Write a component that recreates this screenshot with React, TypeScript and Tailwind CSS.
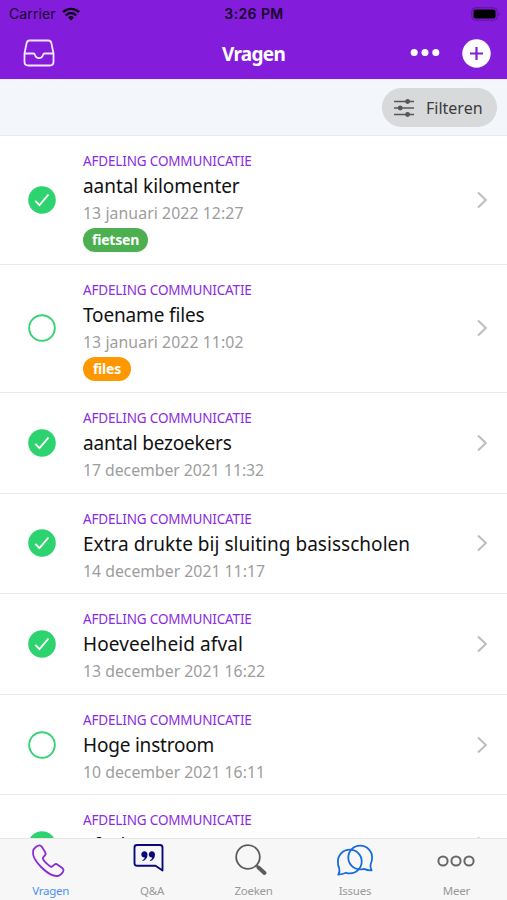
import type { ReactNode } from 'react';
import clsx from 'clsx';

interface Question {
  title: string;
  titleClass?: string;
  date?: string;
  dateClass?: string;
  done: boolean;
  tag?: { label: string; className: string };
}

const questions: Question[] = [
  {
    title: 'aantal kilomenter',
    titleClass: 'tracking-[-0.05px]',
    date: '13 januari 2022 12:27',
    dateClass: 'tracking-[0.08px]',
    done: true,
    tag: { label: 'fietsen', className: 'w-[65px] bg-[#4caf50]' },
  },
  {
    title: 'Toename files',
    titleClass: 'tracking-[-0.15px]',
    date: '13 januari 2022 11:02',
    dateClass: 'tracking-[0.08px]',
    done: false,
    tag: { label: 'files', className: 'w-12 bg-[#ff9800]' },
  },
  {
    title: 'aantal bezoekers',
    titleClass: 'tracking-[-0.18px]',
    date: '17 december 2021 11:32',
    dateClass: 'tracking-[-0.04px]',
    done: true,
  },
  {
    title: 'Extra drukte bij sluiting basisscholen',
    titleClass: 'tracking-[0.03px]',
    date: '14 december 2021 11:17',
    done: true,
  },
  {
    title: 'Hoeveelheid afval',
    titleClass: 'tracking-[0.1px]',
    date: '13 december 2021 16:22',
    done: true,
  },
  {
    title: 'Hoge instroom',
    titleClass: 'tracking-[-0.2px]',
    date: '10 december 2021 16:11',
    done: false,
  },
  {
    title: 'afval',
    done: true,
  },
];

function StatusBar() {
  return (
    <div className="flex h-[27px] items-center justify-between pr-[6px] pl-[9px] font-['Inter'] text-[#16042a]">
      <div className="flex w-[80px] items-center gap-[6px]">
        <span className="text-[14px] leading-[27px] tracking-[0.1px]">Carrier</span>
        <svg width="18" height="14" viewBox="0 0 18 14" fill="none" stroke="#0b0115" strokeWidth="2.4">
          <path d="M1 5.2a11.4 11.4 0 0 1 16 0" />
          <path d="M3.8 8.3a7.4 7.4 0 0 1 10.4 0" />
          <path d="M9 13.6 6 10.5a4.3 4.3 0 0 1 6 0z" fill="#0b0115" stroke="none" />
        </svg>
      </div>
      <span className="pr-[2px] text-[14px] font-semibold tracking-[0.4px] whitespace-nowrap">3:26 PM</span>
      <div className="flex w-[80px] justify-end">
        <svg width="30" height="14" viewBox="0 0 30 14">
          <rect x="0.8" y="0.8" width="25.4" height="12.4" rx="3.5" fill="none" stroke="#5a1397" />
          <rect x="2.5" y="2.5" width="22" height="9" rx="1.8" fill="#000" />
          <path d="M27.5 5v4c1.4-.5 1.4-3.5 0-4z" fill="#5a1397" />
        </svg>
      </div>
    </div>
  );
}

function NavBar() {
  return (
    <div className="flex h-[52px] items-center justify-between pr-4 pl-[23px] text-white">
      <div className="w-[80px]">
        <svg width="32" height="28" viewBox="0 0 32 28" fill="none" stroke="#f6e6ff" strokeWidth="1.8" strokeLinejoin="round">
          <path d="M1.5 14.5 3.6 4.2Q4.1 1.5 6.8 1.5h18.4q2.7 0 3.2 2.7l2.1 10.3v8.3q0 3.7-3.7 3.7H5.2q-3.7 0-3.7-3.7z" />
          <path d="M1.5 14.5h9.3c.6 0 .8.4 1 1 .6 2.3 2.1 3.6 4.2 3.6s3.6-1.3 4.2-3.6c.2-.6.4-1 1-1h9.3" />
        </svg>
      </div>
      <h1 className="pt-[2px] text-[19px] leading-7 font-bold tracking-[-0.7px]">Vragen</h1>
      <div className="flex w-[87px] items-center justify-end gap-[22px]">
        <svg width="30" height="8" viewBox="0 0 30 8" fill="#fff">
          <circle cx="4.2" cy="3.5" r="3.5" />
          <circle cx="15" cy="3.5" r="3.5" />
          <circle cx="25.8" cy="3.5" r="3.5" />
        </svg>
        <svg width="29" height="29" viewBox="0 0 29 29">
          <circle cx="14.5" cy="14.5" r="14.2" fill="#fff" />
          <path d="M14.5 8v13M8 14.5h13" stroke="#841ddb" strokeWidth="2.2" />
        </svg>
      </div>
    </div>
  );
}

function FilterBar() {
  return (
    <div className="flex h-[57px] items-center justify-end border-t border-b border-t-[#f6eaff] border-b-[#e9eaec] bg-[#f3f6fa] pr-[10px]">
      <button className="flex h-[39px] w-[115px] items-center rounded-full bg-[#d7d9db] pl-3 text-[#3c3c3c]">
        <svg width="20" height="18" viewBox="0 0 20 18" stroke="#555759" strokeWidth="1.5" fill="#555759">
          <path d="M0 2.5h20M0 9h20M0 15.5h20" />
          <circle cx="13.6" cy="2.5" r="1.7" />
          <circle cx="6.2" cy="9" r="1.7" />
          <circle cx="13.6" cy="15.5" r="1.7" />
        </svg>
        <span className="ml-3 text-base">Filteren</span>
      </button>
    </div>
  );
}

function Status({ done }: { done: boolean }) {
  return (
    <svg className="shrink-0" width="28" height="28" viewBox="0 0 28 28" fill="none">
      {done ? (
        <>
          <circle cx="14" cy="14" r="13.8" fill="#2dd36f" />
          <path d="m7.3 14.8 4.2 4.4 9-10.7" stroke="#fff" strokeWidth="1.9" />
        </>
      ) : (
        <circle cx="14" cy="14" r="12.8" stroke="#35d374" strokeWidth="1.9" />
      )}
    </svg>
  );
}

function QuestionRow({ question }: { question: Question }) {
  const { title, titleClass, date, dateClass, done, tag } = question;
  return (
    <li
      className={clsx(
        'flex shrink-0 items-center border-b border-[#ebebeb] pr-[19px] pl-7',
        tag ? 'h-[128.5px]' : 'h-[100.6px]'
      )}
    >
      <Status done={done} />
      <div className="ml-[27px] flex-1 self-start pt-[14px] whitespace-nowrap">
        <p className="text-[13.5px] leading-[22px] tracking-[-0.16px] text-[#8a2be0]">AFDELING COMMUNICATIE</p>
        <p className={clsx('text-[19px] leading-[28px] text-[#111]', titleClass)}>{title}</p>
        {date && <p className={clsx('text-[15.8px] leading-[26px] text-[#9d9d9d]', dateClass)}>{date}</p>}
        {tag && (
          <span
            className={clsx(
              'mt-[2px] flex h-6 items-center justify-center rounded-full text-sm font-bold tracking-[-0.2px] text-white',
              tag.className
            )}
          >
            {tag.label}
          </span>
        )}
      </div>
      <svg width="12" height="18" viewBox="0 0 12 18" fill="none" stroke="#bdbdbd" strokeWidth="2">
        <path d="m2 1.5 7.8 7.5L2 16.5" />
      </svg>
    </li>
  );
}

function Tab({ label, active, children }: { label: string; active?: boolean; children: ReactNode }) {
  return (
    <div className="flex flex-1 flex-col items-center">
      <div className="flex h-[43px] items-center">{children}</div>
      <span
        className={clsx(
          'text-[11.5px] leading-[18px] tracking-[-0.25px]',
          active ? 'text-[#4a90f5]' : 'text-[#999]'
        )}
      >
        {label}
      </span>
    </div>
  );
}

function TabBar() {
  return (
    <nav className="flex h-[62px] shrink-0 border-t border-[#e6e6e6] bg-[#f7f7f7]">
      <Tab label="Vragen" active>
        <svg className="-ml-[5px]" width="34" height="34" viewBox="0 0 34 34" fill="none" stroke="#8a2bd8" strokeWidth="1.8" strokeLinejoin="round">
          <path d="M8.2 1.3C6.1 1.6 2.6 4.3 2.1 7c-.7 4.3 2.3 10.3 8 16 5.8 5.9 12 9.300 16.500 9 2.600-.2 5.600-3.600 5.900-5.600.1-.9-.3-1.700-1.200-2.400l-5-3.600c-1-.7-2-.5-2.900.2l-2.200 1.800c-.7.5-1.400.4-2.200-.1-1.100-.7-2.400-1.800-3.700-3.100s-2.300-2.500-3.100-3.700c-.5-.8-.5-1.500 0-2.100l1.900-2.300c.8-1 .7-2 0-3L10.800 2.700c-.7-1-1.600-1.500-2.600-1.400z" />
        </svg>
      </Tab>
      <Tab label="Q&A">
        <svg className="-mt-[5px] -ml-[7px]" width="31" height="30" viewBox="0 0 31 30" fill="none" stroke="#0b087b" strokeWidth="1.9" strokeLinejoin="round">
          <path d="M4 2h23q2.5 0 2.5 2.5v23l-7-4.7H4q-2.5 0-2.5-2.5V4.5Q1.5 2 4 2z" />
          <g fill="#0b087b" stroke="none">
            <path d="M11.4 8.3c1.9 0 3.1 1.4 3.1 3.5 0 3.1-2 5.6-4.7 6.2-.5.1-.7-.6-.2-.8 1.3-.6 2-1.5 2.1-2.6-2 .1-3.4-1.3-3.4-3.1 0-1.8 1.3-3.2 3.1-3.2z" />
            <path d="M18.9 8.3c1.9 0 3.1 1.4 3.1 3.5 0 3.1-2 5.6-4.7 6.2-.5.1-.7-.6-.2-.8 1.3-.6 2-1.5 2.1-2.6-2 .1-3.4-1.3-3.4-3.1 0-1.8 1.3-3.2 3.1-3.2z" />
          </g>
        </svg>
      </Tab>
      <Tab label="Zoeken">
        <svg className="-mt-[1px] -ml-[5px]" width="32" height="32" viewBox="0 0 32 32" fill="none" stroke="#5c5c5c">
          <circle cx="13" cy="13" r="11.8" strokeWidth="1.8" />
          <path d="m21.5 21.5 2.5 2.3" strokeWidth="2" />
          <path d="m23.5 23.5 6 5.5" strokeWidth="3.8" strokeLinecap="round" />
        </svg>
      </Tab>
      <Tab label="Issues">
        <svg className="-mt-[2px]" width="36" height="32" viewBox="0 0 36 32" fill="none" stroke="#176bdc" strokeWidth="1.8" strokeLinejoin="round">
          <path d="M1.3 30.6c1.3-2.1 1.5-4.400.9-6.600C1 22 .9 19.700.9 17.500a11.900 11.900 0 1 1 11.900 11.900c-1.300 0-2.500-.2-3.700-.6-2.400 1.100-5 1.700-7.800 1.800z" />
          <path d="M34.600 26.300c-1.300-2-1.500-4.300-.9-6.500 1-2 1.400-4.300 1.400-6.300a11.900 11.900 0 1 0-11.900 11.900c1.300 0 2.500-.2 3.700-.6 2.400 1 5 1.600 7.700 1.500z" />
        </svg>
      </Tab>
      <Tab label="Meer">
        <svg className="mt-[1px]" width="38" height="12" viewBox="0 0 38 12" fill="none" stroke="#686868" strokeWidth="2">
          <circle cx="6" cy="6" r="4.6" />
          <circle cx="19" cy="6" r="4.6" />
          <circle cx="32" cy="6" r="4.6" />
        </svg>
      </Tab>
    </nav>
  );
}

export default function App() {
  return (
    <div className="flex h-[900px] w-[507px] flex-col overflow-hidden bg-white font-['Noto_Sans','Open_Sans',sans-serif]">
      <header className="shrink-0 bg-[#841ddb]">
        <StatusBar />
        <NavBar />
        <FilterBar />
      </header>
      <ul className="flex min-h-0 flex-1 flex-col overflow-hidden">
        {questions.map((question, index) => (
          <QuestionRow key={index} question={question} />
        ))}
      </ul>
      <TabBar />
    </div>
  );
}
